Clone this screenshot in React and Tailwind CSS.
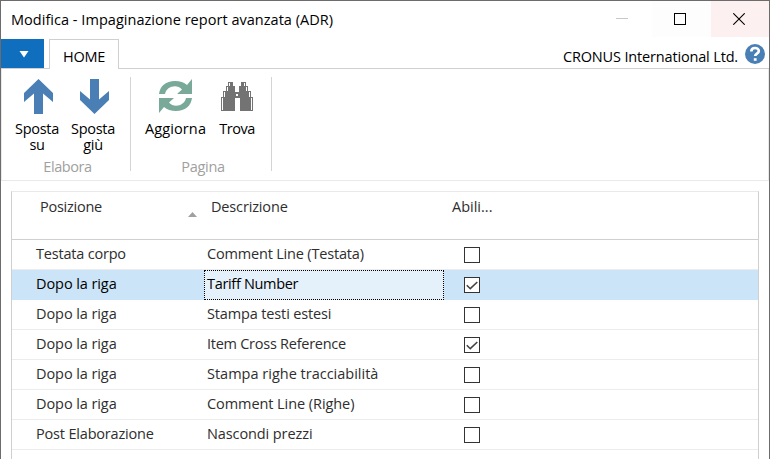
const rows = [
  { pos: "Testata corpo", desc: "Comment Line (Testata)", on: false, pt: "tracking-[-0.2px]", dt: "tracking-[-0.18px]" },
  { pos: "Dopo la riga", desc: "Tariff Number", on: true, selected: true, pt: "tracking-[-0.08px]", dt: "tracking-[-0.32px]" },
  { pos: "Dopo la riga", desc: "Stampa testi estesi", on: false, pt: "tracking-[-0.08px]", dt: "tracking-[-0.14px]" },
  { pos: "Dopo la riga", desc: "Item Cross Reference", on: true, pt: "tracking-[-0.08px]", dt: "tracking-[-0.26px]" },
  { pos: "Dopo la riga", desc: "Stampa righe tracciabilità", on: false, pt: "tracking-[-0.08px]", dt: "tracking-[0px]" },
  { pos: "Dopo la riga", desc: "Comment Line (Righe)", on: false, pt: "tracking-[-0.08px]", dt: "tracking-[-0.07px]" },
  { pos: "Post Elaborazione", desc: "Nascondi prezzi", on: false, pt: "tracking-[-0.18px]", dt: "tracking-[-0.1px]" },
];

function Checkbox({ on }) {
  return (
    <span className="mt-1 flex h-4 w-4 items-center justify-center border border-[#333] bg-white">
      {on && (
        <svg width="14" height="14" viewBox="0 0 14 14" fill="none" stroke="#444" strokeWidth="1.6">
          <path d="M1.8 7.2 5.3 10.7 12.3 4" />
        </svg>
      )}
    </span>
  );
}

function Arrow({ down }) {
  return (
    <svg width="29" height="35" viewBox="0 0 29 35" className={down ? "rotate-180" : ""} fill="#4a7fb5">
      <path d="M14.5 0 29 14V23L19 14.5V35H10V14.5L0 23V14Z" />
    </svg>
  );
}

function Refresh() {
  const half = "M0 15C1 7 7 2 16 2c5 0 9 1.500 12 4L33 0V15H18l5-4.500c-2-2.200-4.500-3.200-7-3.200-5 0-9 3-10 7.700Z";
  return (
    <svg width="33" height="35" viewBox="0 0 33 35" fill="#79a998">
      <path d={half} />
      <path d={half} transform="rotate(180 16.5 17)" />
    </svg>
  );
}

function Binoculars() {
  return (
    <svg width="32" height="30" viewBox="0 0 32 30" fill="#737373" shapeRendering="crispEdges">
      <path d="M7 0h5v4h2v6h4V4h2V0h5v4h2v5h3v6h2v14H19V16h-5v13H0V15h2V9h3V4h2Z" />
      <path fill="#fff" d="M8 1h1v3H8ZM6 5h1v4H6ZM3 10h1v5H3ZM1 16h1v12H1ZM23 1h1v3h-1ZM25 5h1v4h-1ZM28 10h1v5h-1ZM30 16h1v12h-1ZM15 12h2v2h-2Z" />
    </svg>
  );
}

function Action({ icon, children, className }) {
  return (
    <div className={"flex flex-col items-center " + className}>
      <div className="flex h-[42px] items-start">{icon}</div>
      <div className="text-center leading-4 whitespace-nowrap">{children}</div>
    </div>
  );
}

export default function App() {
  return (
    <div className="flex h-[459px] w-[770px] flex-col overflow-hidden border-x border-t border-[#6d6b6c] bg-white font-['Open_Sans','Noto_Sans',sans-serif] text-[14.5px] text-black">
      <header className="flex h-[38px] shrink-0">
        <h1 className="flex-1 pt-2 pl-[10px] leading-[22px] tracking-[0.03px] whitespace-nowrap">
          Modifica - Impaginazione report avanzata (ADR)
        </h1>
        <div className="flex h-9">
          <div className="flex w-[59px] justify-center pt-[17px] pr-[2px]">
            <span className="h-px w-3 bg-[#c8c8c8]" />
          </div>
          <div className="flex w-[59px] justify-center bg-[#fdfdfd] pt-3 pr-[3px]">
            <span className="h-3 w-3 border border-black" />
          </div>
          <div className="flex w-[58px] justify-center bg-[#fdf0f0] pt-3 pr-[2px]">
            <svg width="12" height="12" viewBox="0 0 12 12" stroke="#000" strokeWidth="1.1">
              <path d="M.3.3 11.700 11.700M11.700.3.3 11.700" />
            </svg>
          </div>
        </div>
      </header>

      <nav className="flex h-[30px] shrink-0 border-b border-[#cfcfcf]">
        <div className="flex h-[29px] w-[43px] items-start justify-center border border-[#3d88d0] bg-[#106ebe] pt-[11px] pl-[3px] outline-1 -outline-offset-1 outline-[#106ebe]">
          <svg width="10" height="7" viewBox="0 0 10 7" fill="#fff">
            <path d="M.5 0h9L5 6.500Z" />
          </svg>
        </div>
        <div className="-mb-px ml-[5px] h-[30px] w-[70px] border border-b-0 border-[#cfcfcf] bg-white pl-[13px] leading-[33px] tracking-[-0.25px]">
          HOME
        </div>
        <div className="ml-auto flex pr-1">
          <span className="mr-[7px] leading-[35px] tracking-[-0.16px] whitespace-nowrap">CRONUS International Ltd.</span>
          <svg width="20" height="20" viewBox="0 0 20 20" className="mt-[5px]">
            <circle cx="10" cy="10" r="10" fill="#4a7fb5" />
            <path d="M6.300 7.500C6.300 2.800 13.800 3 13.800 7c0 2.800-3.600 2.500-3.600 5" fill="none" stroke="#fff" strokeWidth="2.700" />
            <path d="M8.800 14.200h2.800v2.600H8.800Z" fill="#fff" />
          </svg>
        </div>
      </nav>

      <section className="flex h-28 shrink-0 border-x border-b border-[#e9e9e9]">
        <div className="mt-2 flex h-[94px] w-[129px] flex-col border-r border-[#d4d4d4]">
          <div className="flex h-[82px] shrink-0 pt-[2px] pl-[7px]">
            <Action className="w-14 tracking-[-0.3px]" icon={<div className="pl-[3px]"><Arrow /></div>}>Sposta<br />su</Action>
            <Action className="w-14 tracking-[-0.3px]" icon={<div className="pl-[3px]"><Arrow down /></div>}>Sposta<br />giù</Action>
          </div>
          <div className="pl-[3px] text-center leading-4 tracking-[-0.4px] text-[#a0a0a0]">Elabora</div>
        </div>
        <div className="mt-2 flex h-[94px] w-[141px] flex-col border-r border-[#d4d4d4]">
          <div className="flex h-[82px] shrink-0 pt-[2px] pl-[10px]">
            <Action className="w-[69px] tracking-[0.12px]" icon={<Refresh />}>Aggiorna</Action>
            <Action className="w-[54px] tracking-[-0.5px]" icon={<div className="pt-[3px]"><Binoculars /></div>}>Trova</Action>
          </div>
          <div className="pl-1 text-center leading-4 tracking-[-0.3px] text-[#a0a0a0]">Pagina</div>
        </div>
      </section>

      <main className="mx-[10px] mt-[10px] flex-1 border-x border-t border-x-[#cfcfcf] border-t-[#e9e9e9] text-[#2e2e2e]">
        <div className="flex h-12 border-b border-[#d0d0d0] leading-[30px]">
          <div className="flex w-[192px] justify-between pr-[7px] pl-7">
            <span className="tracking-[-0.25px]">Posizione</span>
            <svg width="9" height="5" viewBox="0 0 9 5" className="mt-5" fill="#a0a0a0">
              <path d="M4.500 0 9 5H0Z" />
            </svg>
          </div>
          <div className="w-[240px] pl-[7px] tracking-[-0.15px]">Descrizione</div>
          <div className="pl-2 tracking-[0px]">Abili...</div>
        </div>
        {rows.map((r, i) => (
          <div
            key={i}
            className={"flex h-[30px] border-b leading-[27px] whitespace-nowrap " + (r.selected ? "border-[#cce4f7] bg-[#cce4f7] text-black" : "border-[#ececec]")}
          >
            <div className={"w-[192px] pl-6 " + r.pt}>{r.pos}</div>
            {r.selected ? (
              <div className={"h-[30px] w-[240px] border border-dotted border-black bg-[#e5f1fa] pl-[2px] leading-[25px] " + r.dt}>{r.desc}</div>
            ) : (
              <div className={"w-[240px] pl-[3px] " + r.dt}>{r.desc}</div>
            )}
            <div className="pt-[3px] pl-5">
              <Checkbox on={r.on} />
            </div>
          </div>
        ))}
      </main>
    </div>
  );
}
